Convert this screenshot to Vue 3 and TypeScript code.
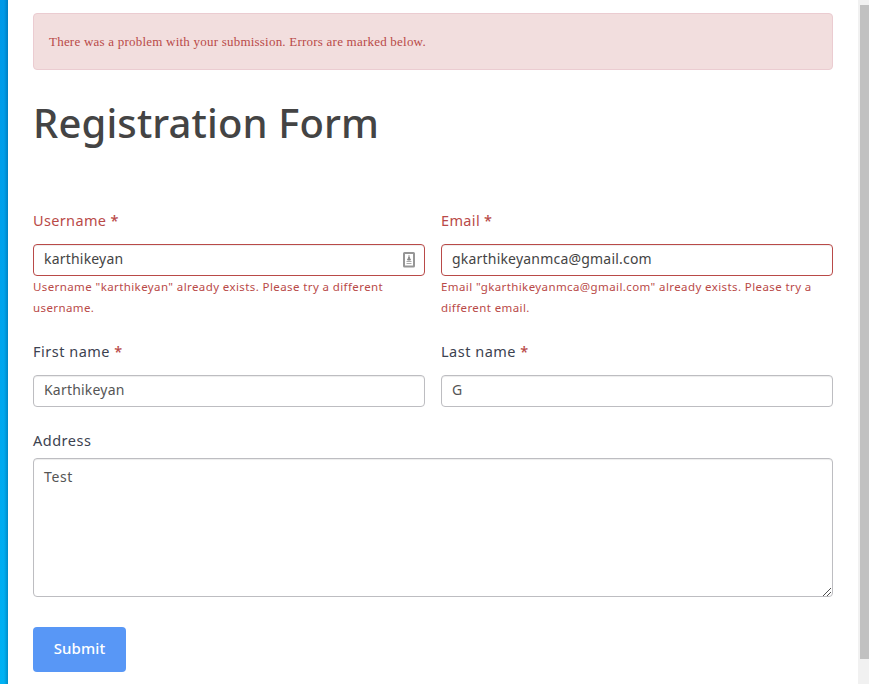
<script setup lang="ts">
import { ref } from 'vue'

interface Field {
  id: string
  label: string
  value: string
  error?: string
  icon?: boolean
}

const fields = ref<Field[]>([
  {
    id: 'username',
    label: 'Username',
    value: 'karthikeyan',
    error: 'Username "karthikeyan" already exists. Please try a different username.',
    icon: true,
  },
  {
    id: 'email',
    label: 'Email',
    value: 'gkarthikeyanmca@gmail.com',
    error: 'Email "gkarthikeyanmca@gmail.com" already exists. Please try a different email.',
  },
  { id: 'first', label: 'First name', value: 'Karthikeyan' },
  { id: 'last', label: 'Last name', value: 'G' },
])
const address = ref('Test')
</script>

<template>
  <div class="page">
    <div class="edge"></div>
    <main class="sheet">
      <div class="alert">There was a problem with your submission. Errors are marked below.</div>
      <h1>Registration Form</h1>
      <form @submit.prevent>
        <div class="grid">
          <div v-for="f in fields" :key="f.id" class="field" :class="{ invalid: f.error }">
            <label :for="f.id">{{ f.label }} <span class="star">*</span></label>
            <div class="control">
              <input :id="f.id" v-model="f.value" type="text" spellcheck="false" />
              <svg v-if="f.icon" class="autofill" width="12" height="16" viewBox="0 0 12 16">
                <rect x="1" y="1" width="10" height="13.5" rx="0.5" fill="#fff" stroke="#969696" stroke-width="2" />
                <path d="M6 3.2v2.4M6 5l-1.5 3h3z" fill="#888" stroke="#888" stroke-width="1" />
                <path d="M3.5 9.5h5M3.5 11.5h5" stroke="#aaa" stroke-width="1" />
              </svg>
            </div>
            <p v-if="f.error" class="error">{{ f.error }}</p>
          </div>
        </div>
        <div class="field address">
          <label for="address">Address</label>
          <div class="area">
            <textarea id="address" v-model="address" spellcheck="false"></textarea>
            <svg class="grip" width="9" height="9" viewBox="0 0 9 9" shape-rendering="crispEdges">
              <path d="M0 8h1v1H0zM1 7h1v1H1zM2 6h1v1H2zM3 5h1v1H3zM4 4h1v1H4zM5 3h1v1H5zM6 2h1v1H6zM7 1h1v1H7zM4 8h1v1H4zM5 7h1v1H5zM6 6h1v1H6zM7 5h1v1H7z" fill="#505050" />
            </svg>
          </div>
        </div>
        <button type="submit">Submit</button>
      </form>
    </main>
    <div class="track"><div class="thumb"></div></div>
  </div>
</template>

<style>
body {
  overflow: hidden;
}
</style>

<style scoped>
.page {
  display: flex;
  height: 684px;
  background: #fff;
  font-family: "Noto Sans", "Open Sans", sans-serif;
  font-size: 14px;
  color: #444;
}
.page * {
  box-sizing: border-box;
}
.edge {
  width: 8px;
  background: linear-gradient(to right, transparent 4px, rgba(0, 50, 90, 0.28)), linear-gradient(#0099e8, #00b2f4);
}
.sheet {
  flex: 1;
  padding: 13px 25px 0;
}
.alert {
  height: 57px;
  padding: 0 15px;
  border: 1px solid #ebccd1;
  border-radius: 4px;
  background: #f2dede;
  color: #b94a48;
  font: 13px/56px "Liberation Serif", serif;
  letter-spacing: 0.22px;
  white-space: nowrap;
}
h1 {
  height: 56px;
  margin: 26px 0 58px;
  color: #444;
  font-size: 40px;
  font-weight: 500;
  line-height: 53px;
  letter-spacing: 0.12px;
  white-space: nowrap;
}
.grid {
  display: grid;
  grid-template-columns: 392px 392px;
  grid-template-rows: 131px 89px;
  column-gap: 16px;
}
.field label {
  display: block;
  height: 34px;
  color: #3c4250;
  font-size: 14.5px;
  line-height: 20px;
  letter-spacing: 0.5px;
}
.star {
  color: #b94a48;
  font-weight: 500;
}
.invalid label {
  color: #b94a48;
  letter-spacing: 0.35px;
}
.control {
  position: relative;
  height: 32px;
}
input,
textarea {
  display: block;
  width: 100%;
  border: 1px solid #bdbdc1;
  border-radius: 4px;
  outline: 0;
  background: #fff;
  box-shadow: inset 0 1px 1px rgba(0, 0, 0, 0.075);
  color: #555;
  font: 14px/20px "Noto Sans", "Open Sans", sans-serif;
  letter-spacing: 0.2px;
}
input {
  height: 32px;
  padding: 3px 10px 7px;
}
.invalid input {
  border-color: #b94a48;
  color: #444;
}
.autofill {
  position: absolute;
  top: 8px;
  right: 10px;
}
.error {
  margin: 0;
  color: #b94a48;
  font-size: 11.5px;
  line-height: 21px;
  letter-spacing: 0.4px;
}
.address label {
  height: 28px;
}
.area {
  position: relative;
  height: 139px;
}
textarea {
  height: 139px;
  padding: 8px 10px;
  letter-spacing: 0.6px;
  resize: none;
}
.grip {
  position: absolute;
  right: 1px;
  bottom: 1px;
}
button {
  display: block;
  width: 93px;
  height: 45px;
  margin-top: 30px;
  padding: 0 0 4px;
  border: 0;
  border-radius: 4px;
  background: #5897f6;
  color: #fff;
  font: 500 15px/20px "Noto Sans", "Open Sans", sans-serif;
  letter-spacing: 0.1px;
}
.track {
  width: 11px;
  padding: 5px 0 0 2px;
  background: #f1f1f1;
}
.thumb {
  height: 654px;
  background: #c1c1c1;
}
</style>
